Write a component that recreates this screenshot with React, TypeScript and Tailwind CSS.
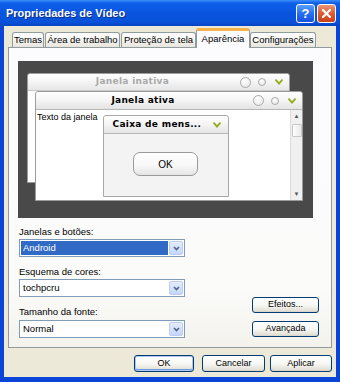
import React from 'react';

const btn =
  "flex items-center justify-center border border-[#003c74] rounded-[3px] bg-[linear-gradient(180deg,#ffffff_0%,#f6f6f2_55%,#e3e0d6_90%,#d6d0c5_100%)] text-[9px] text-black";

const Chevron: React.FC<{ color?: string }> = ({ color = '#93ad1c' }) => (
  <svg width="8" height="6" viewBox="0 0 8 6">
    <path d="M1 1.2 L4 4.6 L7 1.2" stroke={color} strokeWidth="1.9" fill="none" strokeLinecap="round" />
  </svg>
);

const Circle: React.FC<{ size: number }> = ({ size }) => (
  <div
    className="rounded-full border border-[#a9a9a9] bg-[radial-gradient(circle_at_40%_35%,#ffffff,#e4e4e4)]"
    style={{ width: size, height: size }}
  />
);

const TitleButtons: React.FC = () => (
  <div className="flex items-center w-[52px] pl-[3px]">
    <Circle size={11} />
    <div className="w-[7px]" />
    <Circle size={8} />
    <div className="w-[9px]" />
    <Chevron />
  </div>
);

const Dropdown: React.FC<{ value: string; selected?: boolean }> = ({ value, selected }) => (
  <div className="w-[166px] h-[18px] border border-[#7f9db9] bg-white flex items-center p-[1px]">
    <div
      className={
        selected
          ? 'flex-1 h-full bg-[#316ac5] text-white flex items-center pl-[2px] text-[9.5px]'
          : 'flex-1 h-full text-black flex items-center pl-[2px] text-[9.5px]'
      }
    >
      {value}
    </div>
    <div className="w-[14px] h-full ml-[1px] rounded-[2px] border border-[#b9cdf5] bg-[linear-gradient(180deg,#e4ecfd_0%,#c6d6fb_100%)] flex items-center justify-center">
      <svg width="7" height="5" viewBox="0 0 7 5">
        <path d="M1 1 L3.5 3.6 L6 1" stroke="#4d6185" strokeWidth="1.5" fill="none" />
      </svg>
    </div>
  </div>
);

const tabBase =
  'h-[15px] flex items-center justify-center border border-b-0 border-[#919b9c] rounded-t-[3px] bg-[linear-gradient(180deg,#ffffff_0%,#f3f3ef_60%,#e6e4dc_100%)] text-[9.5px] text-black';

const winTitle = "font-['DejaVu_Sans',sans-serif] font-bold text-[9px] tracking-[0.3px]";

export default function App() {
  return (
    <div className="w-[340px] h-[382px] flex flex-col overflow-hidden bg-[#0a45d8] font-['Liberation_Sans',Arial,sans-serif]">
      {/* title bar */}
      <div className="h-[26px] flex items-center pl-[6px] pr-[4px] bg-[linear-gradient(180deg,#3d8ffb_0%,#0f5fe8_12%,#0a55e0_50%,#0851d8_85%,#0644c4_100%)]">
        <div className="flex-1 text-white font-bold text-[11px] [text-shadow:1px_1px_0_#0a2d8a]">Propriedades de Vídeo</div>
        <div className="w-[19px] h-[19px] rounded-[3px] border border-white bg-[linear-gradient(180deg,#5aa0fb_0%,#2a6ef0_50%,#1551e0_100%)] flex items-center justify-center text-white font-bold text-[13px] leading-none">
          ?
        </div>
        <div className="w-[2px]" />
        <div className="w-[19px] h-[19px] rounded-[3px] border border-white bg-[linear-gradient(180deg,#eb9575_0%,#df5c33_50%,#c7401a_100%)] flex items-center justify-center">
          <svg width="11" height="11" viewBox="0 0 11 11">
            <path d="M2 2 L9 9 M9 2 L2 9" stroke="#fff" strokeWidth="2.2" strokeLinecap="round" />
          </svg>
        </div>
      </div>

      {/* body */}
      <div className="flex-1 mx-[4px] mb-[5px] bg-[#ece9d8] flex flex-col">
        {/* tabs */}
        <div className="h-[21px] pt-[2px] pl-[8px] flex items-end">
          <div className={tabBase + ' w-[32px]'}>Temas</div>
          <div className="w-[1px]" />
          <div className={tabBase + ' w-[75px]'}>Área de trabalho</div>
          <div className="w-[1px]" />
          <div className={tabBase + ' w-[75px]'}>Proteção de tela</div>
          <div className="w-[54px] h-[20px] -mb-[1px] relative z-10 flex items-center justify-center border-x border-[#919b9c] border-t-[3px] border-t-[#f5b24a] rounded-t-[3px] bg-[#fcfcfe] text-[9.5px] text-black">
            Aparência
          </div>
          <div className={tabBase + ' w-[66px]'}>Configurações</div>
        </div>

        {/* panel */}
        <div className="mx-[4px] h-[301px] border border-[#919b9c] bg-[linear-gradient(180deg,#fcfcfe_0%,#fbfbfa_80%,#f3f2ec_100%)] pt-[13px] pl-[9px] flex flex-col">
          {/* preview */}
          <div className="w-[295px] h-[157px] bg-[#494949] relative">
            {/* inactive window */}
            <div className="absolute left-[9px] top-[12px] w-[263px] h-[110px] bg-white border border-[#9c9c9c] rounded-t-[3px]">
              <div className="h-[17px] flex items-center bg-[linear-gradient(180deg,#ffffff_0%,#f4f4f4_50%,#e6e6e6_100%)] border-b border-[#c8c8c8] rounded-t-[3px]">
                <div className={winTitle + ' flex-1 text-center text-[#a8a8a8]'}>Janela inativa</div>
                <TitleButtons />
              </div>
            </div>
            {/* active window */}
            <div className="absolute left-[17px] top-[30px] w-[268px] h-[110px] bg-white border border-[#9c9c9c] rounded-t-[3px] flex flex-col">
              <div className="h-[18px] flex items-center bg-[linear-gradient(180deg,#ffffff_0%,#f4f4f4_50%,#e4e4e4_100%)] border-b border-[#b8b8b8] rounded-t-[3px]">
                <div className={winTitle + ' flex-1 text-center text-black'}>Janela ativa</div>
                <TitleButtons />
              </div>
              <div className="flex-1 flex">
                <div className="pl-[1px] pt-[2px] text-[9px] leading-[11px] text-black">Texto da janela</div>
                <div className="ml-[5px] mt-[5px] w-[126px] h-[82px] border border-[#a8a8a8] rounded-t-[3px] bg-[#f3f3f3] flex flex-col">
                  <div className="h-[18px] flex items-center pl-[9px] pr-[7px] bg-[linear-gradient(180deg,#ffffff_0%,#f4f4f4_50%,#e4e4e4_100%)] border-b border-[#b8b8b8] rounded-t-[3px]">
                    <div className={winTitle + ' flex-1 text-black'}>Caixa de mens...</div>
                    <Chevron />
                  </div>
                  <div className="flex-1 flex justify-center pt-[18px]">
                    <div className="w-[65px] h-[24px] rounded-[7px] border border-[#9a9a9a] bg-[linear-gradient(180deg,#ffffff_0%,#f7f7f7_60%,#e4e4e4_100%)] flex items-center justify-center text-[10px] text-black">
                      OK
                    </div>
                  </div>
                </div>
                <div className="flex-1" />
                <div className="w-[12px] bg-[#f0f0f0] border-l border-[#dcdcdc] flex flex-col items-center">
                  <div className="h-[12px] flex items-center justify-center text-[6px] text-[#555]">▲</div>
                  <div className="mt-[2px] w-[10px] h-[13px] border border-[#c8c8c8] bg-[linear-gradient(90deg,#ffffff,#e8e8e8)] rounded-[1px]" />
                  <div className="flex-1" />
                  <div className="h-[12px] flex items-center justify-center text-[6px] text-[#555]">▼</div>
                </div>
              </div>
            </div>
          </div>

          {/* lower controls */}
          <div className="flex pl-[1px] pr-[12px]">
            <div className="flex flex-col w-[166px]">
              <div className="mt-[8px] h-[12px] leading-[12px] text-[9.5px] text-black">Janelas e botões:</div>
              <div className="mt-[1px]"><Dropdown value="Android" selected /></div>
              <div className="mt-[9px] h-[12px] leading-[12px] text-[9.5px] text-black">Esquema de cores:</div>
              <div className="mt-[1px]"><Dropdown value="tochpcru" /></div>
              <div className="mt-[9px] h-[12px] leading-[12px] text-[9.5px] text-black">Tamanho da fonte:</div>
              <div className="mt-[2px]"><Dropdown value="Normal" /></div>
            </div>
            <div className="flex-1" />
            <div className="flex flex-col justify-end pb-[1px]">
              <div className={btn + ' w-[67px] h-[16px]'}>Efeitos...</div>
              <div className="h-[8px]" />
              <div className={btn + ' w-[67px] h-[16px]'}>Avançada</div>
            </div>
          </div>
        </div>

        {/* bottom buttons */}
        <div className="mt-[7px] flex justify-end pr-[4px]">
          <div className={btn + ' w-[60px] h-[17px] shadow-[inset_0_0_0_1px_#a8c8f5,inset_0_-1px_0_1px_#6f9be0]'}>OK</div>
          <div className="w-[8px]" />
          <div className={btn + ' w-[63px] h-[17px]'}>Cancelar</div>
          <div className="w-[5px]" />
          <div className={btn + ' w-[62px] h-[17px]'}>Aplicar</div>
        </div>
      </div>
    </div>
  );
}
